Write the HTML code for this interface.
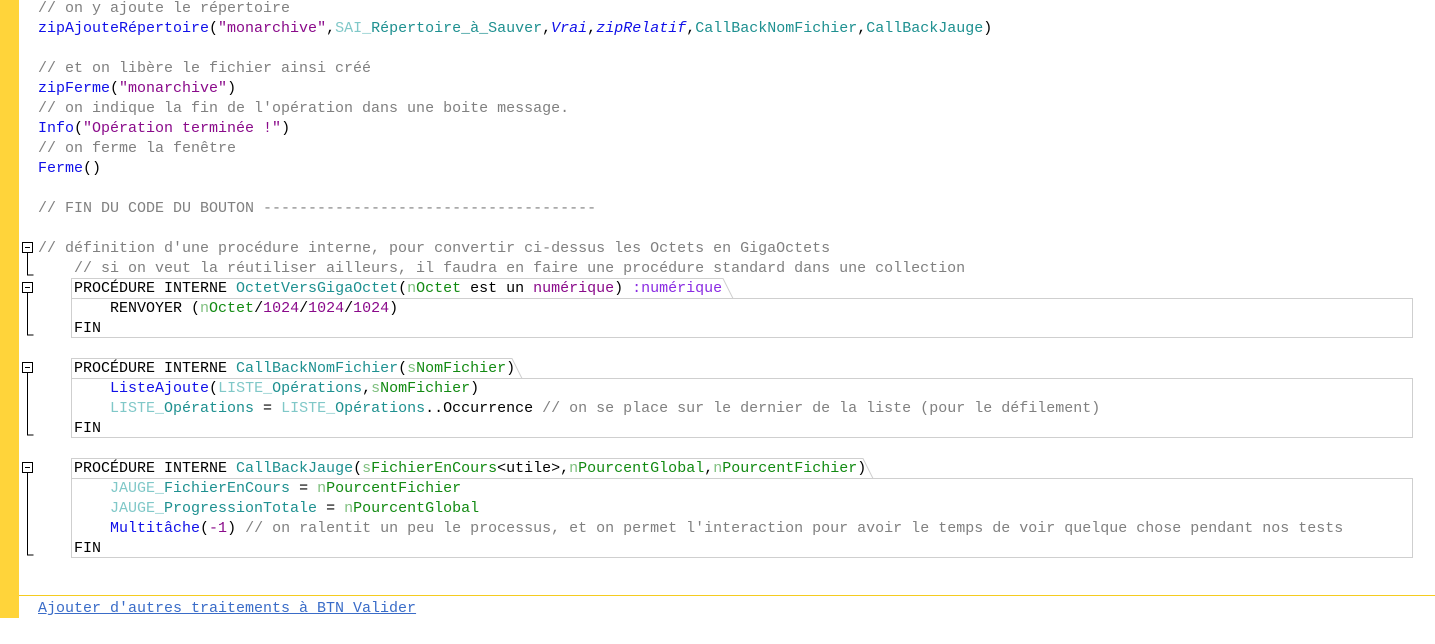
<!DOCTYPE html>
<html><head><meta charset="utf-8"><style>
body{margin:0;width:1435px;height:643px;background:#fff;position:relative;overflow:hidden;font-family:"Liberation Mono",monospace;font-size:15px}
.w{position:absolute;left:0;top:1px;width:1435px;height:643px}
.l{position:absolute;left:38px;height:20px;line-height:20px;white-space:pre;color:#000}
.c{color:#808080}.k{color:#1010e8}.s{color:#8a0a8a}.t{color:#1e9090}.tl{color:#80c8c8}.g{color:#128a12}.gl{color:#80c080}.p{color:#8a2be2}.i{font-style:italic;color:#1010e8}
.box{position:absolute;left:71px;width:1340px;border:1px solid #cfcfcf;background:transparent}
</style></head><body>
<div style="position:absolute;left:0;top:0;width:19px;height:618px;background:#ffd43a"></div>
<div style="position:absolute;left:19px;top:595px;width:1416px;height:1px;background:#f5cc20"></div>

<svg style="position:absolute;left:0;top:0" width="1435" height="643">
<g fill="none" stroke="#cfcfcf">
<path d="M71.5 298.5V278.5H723l10 20"/>
<path d="M71.5 378.5V358.5H512l10 20"/>
<path d="M71.5 478.5V458.5H863l10 20"/>
</g>
<g fill="#fff" stroke="#000" stroke-width="1">
<rect x="22.5" y="242.5" width="10" height="10"/>
<rect x="22.5" y="282.5" width="10" height="10"/>
<rect x="22.5" y="362.5" width="10" height="10"/>
<rect x="22.5" y="462.5" width="10" height="10"/>
<path d="M25 247.5h5M25 287.5h5M25 367.5h5M25 467.5h5"/>
<path d="M27.5 253v22h6M27.5 293v42h6M27.5 373v62h6M27.5 473v82h6" fill="none"/>
</g>
</svg>
<div class="box" style="top:298px;height:38px"></div>
<div class="box" style="top:378px;height:58px"></div>
<div class="box" style="top:478px;height:78px"></div>
<div class="w">
<div class="l c" style="top:-2px">// on y ajoute le répertoire</div>
<div class="l" style="top:18px"><span class="k">zipAjouteRépertoire</span>(<span class="s">"monarchive"</span>,<span class="tl">SAI_</span><span class="t">Répertoire_à_Sauver</span>,<span class="i">Vrai</span>,<span class="i">zipRelatif</span>,<span class="t">CallBackNomFichier</span>,<span class="t">CallBackJauge</span>)</div>
<div class="l c" style="top:58px">// et on libère le fichier ainsi créé</div>
<div class="l" style="top:78px"><span class="k">zipFerme</span>(<span class="s">"monarchive"</span>)</div>
<div class="l c" style="top:98px">// on indique la fin de l'opération dans une boite message.</div>
<div class="l" style="top:118px"><span class="k">Info</span>(<span class="s">"Opération terminée !"</span>)</div>
<div class="l c" style="top:138px">// on ferme la fenêtre</div>
<div class="l" style="top:158px"><span class="k">Ferme</span>()</div>
<div class="l c" style="top:198px">// FIN DU CODE DU BOUTON -------------------------------------</div>
<div class="l c" style="top:238px">// définition d'une procédure interne, pour convertir ci-dessus les Octets en GigaOctets</div>
<div class="l c" style="top:258px">    // si on veut la réutiliser ailleurs, il faudra en faire une procédure standard dans une collection</div>
<div class="l" style="top:278px">    PROCÉDURE INTERNE <span class="t">OctetVersGigaOctet</span>(<span class="gl">n</span><span class="g">Octet</span> est un <span class="s">numérique</span>) <span class="p">:numérique</span></div>
<div class="l" style="top:298px">        RENVOYER (<span class="gl">n</span><span class="g">Octet</span>/<span class="s">1024</span>/<span class="s">1024</span>/<span class="s">1024</span>)</div>
<div class="l" style="top:318px">    FIN</div>
<div class="l" style="top:358px">    PROCÉDURE INTERNE <span class="t">CallBackNomFichier</span>(<span class="gl">s</span><span class="g">NomFichier</span>)</div>
<div class="l" style="top:378px">        <span class="k">ListeAjoute</span>(<span class="tl">LISTE_</span><span class="t">Opérations</span>,<span class="gl">s</span><span class="g">NomFichier</span>)</div>
<div class="l" style="top:398px">        <span class="tl">LISTE_</span><span class="t">Opérations</span> = <span class="tl">LISTE_</span><span class="t">Opérations</span>..Occurrence <span class="c">// on se place sur le dernier de la liste (pour le défilement)</span></div>
<div class="l" style="top:418px">    FIN</div>
<div class="l" style="top:458px">    PROCÉDURE INTERNE <span class="t">CallBackJauge</span>(<span class="gl">s</span><span class="g">FichierEnCours</span>&lt;utile&gt;,<span class="gl">n</span><span class="g">PourcentGlobal</span>,<span class="gl">n</span><span class="g">PourcentFichier</span>)</div>
<div class="l" style="top:478px">        <span class="tl">JAUGE_</span><span class="t">FichierEnCours</span> = <span class="gl">n</span><span class="g">PourcentFichier</span></div>
<div class="l" style="top:498px">        <span class="tl">JAUGE_</span><span class="t">ProgressionTotale</span> = <span class="gl">n</span><span class="g">PourcentGlobal</span></div>
<div class="l" style="top:518px">        <span class="k">Multitâche</span>(<span class="s">-1</span>) <span class="c">// on ralentit un peu le processus, et on permet l'interaction pour avoir le temps de voir quelque chose pendant nos tests</span></div>
<div class="l" style="top:538px">    FIN</div>
<div class="l" style="top:598px;color:#3a6cc8;text-decoration:underline">Ajouter d'autres traitements à BTN Valider</div>
</div>
</body></html>
